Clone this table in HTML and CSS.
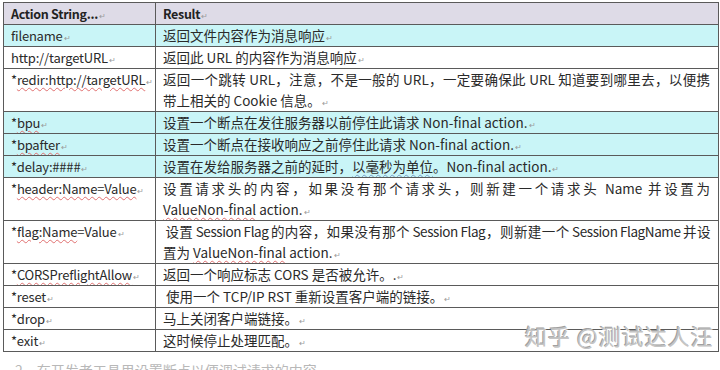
FILE: index.html
```html
<!DOCTYPE html>
<html lang="zh">
<head>
<meta charset="utf-8">
<title>Action Strings</title>
<link rel="stylesheet" href="styles.css">
</head>
<body>
<div class="page">
  <table class="tbl">
    <colgroup><col class="c1"><col class="c2"></colgroup>
    <tr class="head"><th class="k">Action String...<span class="pm">↵</span></th><th class="k">Result<span class="pm">↵</span></th></tr>
    <tr class="cyan"><td class="k">filename<span class="pm">↵</span></td><td>返回文件内容作为消息响应<span class="pm">↵</span></td></tr>
    <tr><td class="k">http://targetURL<span class="pm">↵</span></td><td>返回此 URL 的内容作为消息响应<span class="pm">↵</span></td></tr>
    <tr><td class="k">*<span class="sp">redir:http://targetURL</span><span class="pm">↵</span></td><td><span class="jl">返回一个跳转 URL，注意，不是一般的 URL，一定要确保此 URL 知道要到哪里去，以便携</span><span class="ln">带上相关的 Cookie 信息。<span class="pm">↵</span></span></td></tr>
    <tr class="cyan"><td class="k">*<span class="sp">bpu</span><span class="pm">↵</span></td><td>设置一个断点在发往服务器以前停住此请求 Non-final action.<span class="pm">↵</span></td></tr>
    <tr class="cyan"><td class="k">*<span class="sp">bpafter</span><span class="pm">↵</span></td><td>设置一个断点在接收响应之前停住此请求 Non-final action.<span class="pm">↵</span></td></tr>
    <tr class="cyan"><td class="k">*delay:####<span class="pm">↵</span></td><td>设置在发给服务器之前的延时，<span class="bl">以毫秒为单位</span>。Non-final action.<span class="pm">↵</span></td></tr>
    <tr><td class="k">*<span class="sp">header:Name=Value</span><span class="pm">↵</span></td><td><span class="jl">设置请求头的内容，如果没有那个请求头，则新建一个请求头 Name 并设置为</span><span class="ln"><span class="sp">ValueNon-final</span> action.<span class="pm">↵</span></span></td></tr>
    <tr><td class="k">*<span class="sp">flag:Name</span>=Value<span class="pm">↵</span></td><td><span class="jl tight">&nbsp;设置 Session Flag 的内容，如果没有那个 Session Flag，则新建一个 Session FlagName 并设</span><span class="ln">置为 <span class="sp">ValueNon-final</span> action.<span class="pm">↵</span></span></td></tr>
    <tr><td class="k">*<span class="sp">CORSPreflightAllow</span><span class="pm">↵</span></td><td>返回一个响应标志 CORS 是否被允许。.<span class="pm">↵</span></td></tr>
    <tr><td class="k">*reset<span class="pm">↵</span></td><td>&nbsp;使用一个 TCP/IP RST 重新设置客户端的链接。<span class="pm">↵</span></td></tr>
    <tr><td class="k">*drop<span class="pm">↵</span></td><td>马上关闭客户端链接。<span class="pm">↵</span></td></tr>
    <tr><td class="k">*exit<span class="pm">↵</span></td><td>这时候停止处理匹配。<span class="pm">↵</span></td></tr>
  </table>
  <div class="mark">知乎 @测试达人汪</div>
  <p class="after">2、在开发者工具里设置断点以便调试请求的内容</p>
</div>
</body>
</html>
```
FILE: styles.css
```css
html, body {
  margin: 0;
  padding: 0;
  background: #ffffff;
}
.page {
  position: relative;
  width: 720px;
  height: 370px;
  overflow: hidden;
  padding: 2px 0 0 3px;
  box-sizing: border-box;
  font-family: "Noto Sans CJK SC", "Noto Sans", sans-serif;
  color: #2a2a2a;
}
.tbl {
  border-collapse: collapse;
  width: 715px;
  table-layout: fixed;
  border: 1px solid #4a4a4a;
  font-size: 13.5px;
}
.c1 { width: 152px; }
.c2 { width: 563px; }
.tbl th, .tbl td {
  border: 1px solid #5a5a5a;
  padding: 0 6px 0 7px;
  height: 21px;
  line-height: 21px;
  text-align: left;
  vertical-align: top;
  white-space: nowrap;
  overflow: hidden;
}
.tbl th { font-weight: 700; color: #222; }
.tbl .k {
  font-size: 13px;
  letter-spacing: -0.2px;
}
.tbl th.k {
  font-size: 12.5px;
  letter-spacing: -0.3px;
}
.head { background: #dedbe7; }
.cyan { background: #c9f5f7; }
.pm {
  font-size: 8px;
  line-height: 0;
  color: #9a9a9a;
  margin-left: 1px;
  letter-spacing: 0;
  font-weight: 400;
}
.sp {
  text-decoration: underline wavy #e07070;
  text-decoration-thickness: 1px;
  text-underline-offset: 2px;
}
.bl {
  text-decoration: underline wavy #7aa0c8;
  text-decoration-thickness: 1px;
  text-underline-offset: 2px;
}
.jl {
  display: block;
  text-align: justify;
  text-align-last: justify;
  white-space: nowrap;
  margin-right: 2px;
}
.jl.tight {
  letter-spacing: -0.4px;
  word-spacing: -1px;
}
.ln { display: block; }
.mark {
  position: absolute;
  left: 525px;
  top: 320px;
  font-size: 22px;
  line-height: 30px;
  letter-spacing: 1px;
  color: #c4c4c4;
  text-shadow: 1px 1px 0 #ffffff, -1px -1px 0 #a0a0a0;
}
.after {
  margin: 8px 0 0 12px;
  font-size: 14px;
  line-height: 21px;
  color: #b8b8b8;
}
```
